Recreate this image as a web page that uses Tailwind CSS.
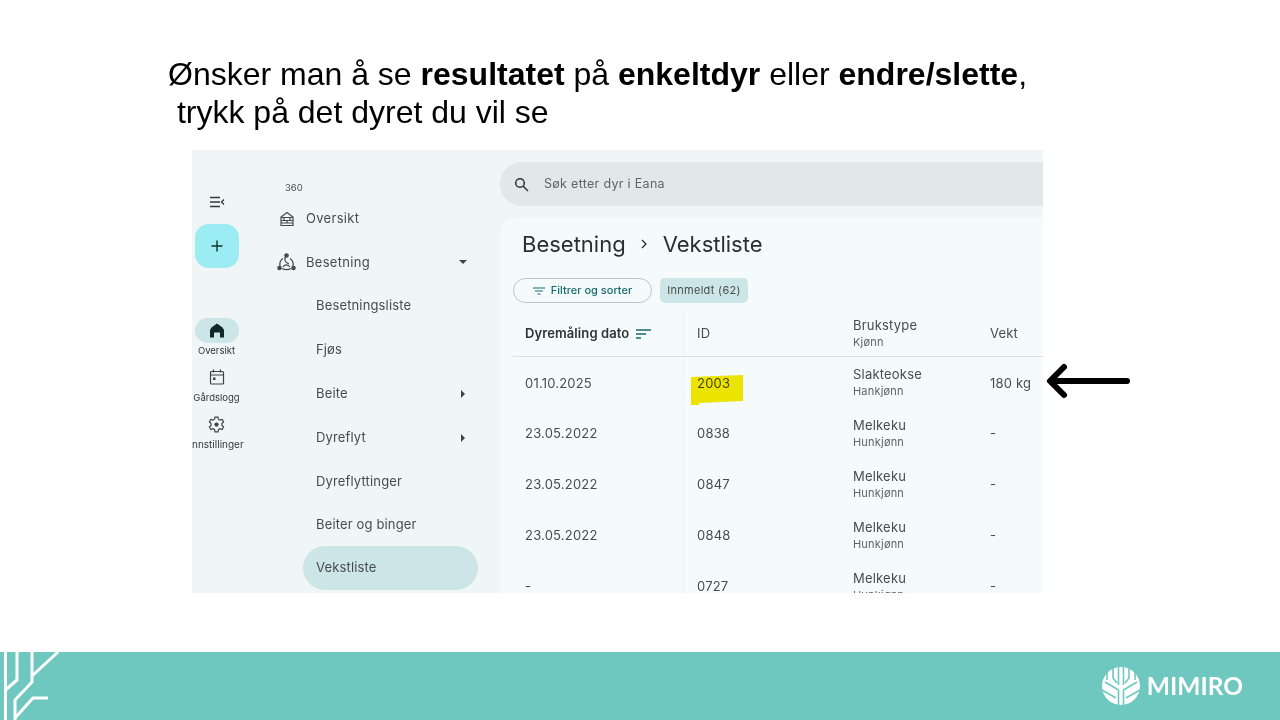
<!DOCTYPE html>
<html lang="en">
<head>
    <meta charset="UTF-8">
    <script src="https://cdn.jsdelivr.net/npm/@tailwindcss/browser@4"></script>
    <title>Vekstliste</title>
</head>
<body class="bg-white">
<div class="relative w-[1280px] h-[720px] overflow-hidden flex flex-col bg-white">

    <!-- heading -->
    <div class="h-[150px] pt-[55px] pl-[168px] font-['Liberation_Sans',sans-serif] text-[32px] leading-[38px] text-black">
        <p>Ønsker man å se <b>resultatet</b> på <b>enkeltdyr</b> eller <b>endre/slette</b>,</p>
        <p class="whitespace-pre"> trykk på det dyret du vil se</p>
    </div>

    <!-- app screenshot -->
    <div class="ml-[192px] w-[851px] h-[443px] overflow-hidden flex bg-[#f0f5f5] font-['Inter',sans-serif] text-[#474c4d]">

        <!-- rail -->
        <div class="w-[49px] shrink-0 flex flex-col items-center">
            <svg class="mt-[44px] w-4 h-4 shrink-0" viewBox="0 0 16 16" fill="none" stroke="#2f3a3c" stroke-width="1.300"><path d="M1 3.500h10M1 8h10M1 12.500h10M15 5.500 12.500 8 15 10.500"/></svg>
            <div class="mt-[14px] w-[44px] h-[44px] shrink-0 rounded-[14px] bg-[#9bedf3] flex items-center justify-center">
                <svg class="w-3 h-3" viewBox="0 0 12 12" stroke="#11312f" stroke-width="1.400"><path d="M6 0.500v11M0.500 6h11"/></svg>
            </div>
            <div class="mt-[50px] w-[44px] h-[25px] shrink-0 rounded-full bg-[#cce6e8] flex items-center justify-center">
                <svg class="w-[14px] h-[15px]" viewBox="0 0 14 15" fill="#10282c"><path d="M7 0.500 12.500 4.500 14 7V14.500H10V9.500H4V14.500H0V7L1.500 4.500Z"/></svg>
            </div>
            <span class="mt-[1px] text-[9.500px] leading-[14px] text-[#2f3a3c]">Oversikt</span>
            <svg class="mt-[11px] w-4 h-4 shrink-0" viewBox="0 0 16 16" fill="none" stroke="#3b4547" stroke-width="1.200"><rect x="1.500" y="2.500" width="13" height="12.500" rx="1"/><path d="M1.500 6h13M4.500 0.500v3M11.500 0.500v3"/><rect x="4" y="8.500" width="2.500" height="2.500" fill="#3b4547" stroke="none"/></svg>
            <span class="mt-[6px] text-[9.500px] leading-[14px] text-[#2f3a3c]">Gårdslogg</span>
            <svg class="mt-[11px] w-[17px] h-[17px] shrink-0" viewBox="0 0 16 16" fill="none" stroke="#3b4547" stroke-width="1.100"><path d="M6.600 1h2.800l.4 2 1.500.9 2-.7 1.400 2.400-1.600 1.400v1.900l1.600 1.400-1.400 2.400-2-.7-1.500.9-.4 2H6.600l-.4-2-1.500-.9-2 .7-1.400-2.400 1.600-1.400V7l-1.600-1.400 1.400-2.400 2 .7 1.500-.9z"/><circle cx="8" cy="8" r="2" fill="#3b4547" stroke="none"/></svg>
            <span class="mt-[4px] text-[10px] leading-[14px] text-[#2f3a3c] whitespace-nowrap">Innstillinger</span>
        </div>

        <!-- nav -->
        <div class="w-[259px] shrink-0 pl-[26px] pr-[22px] text-[13px] tracking-[0.15px]">
            <div class="pt-[32px] pl-[18px] h-[46.500px] text-[9.500px] leading-[12px] text-[#474c4d] tracking-normal">360</div>
            <div class="h-[44px] flex items-center pl-[12px] tracking-[0.3px]">
                <svg class="w-[16px] h-[16px] mr-[11px]" viewBox="0 0 16 16" fill="none" stroke="#444c4e" stroke-width="1.200"><path d="M2 14.500V6L8 1.500 14 6V14.500ZM2 6.500h12M2 9.500h12M2 12h12M8 9.500V12M5 6.500V9.500M11 6.500V9.500"/></svg>
                Oversikt
            </div>
            <div class="h-[43.800px] flex items-center pl-[9px] tracking-[0.3px]">
                <svg class="w-[21px] h-[20px] mr-[9px]" viewBox="0 0 21 20" fill="none" stroke="#444c4e" stroke-width="1.200"><path d="M7 6.500C4.500 8 3.500 11 4 14M14 6.500C16.500 8 17.500 11 17 14M6 16.500C9 18 12 18 15 16.500M10.500 3.500C7.500 7 8.500 10 13 12M14 15C12 12.500 9 12 7 15"/><circle cx="10.500" cy="3.500" r="2.300" fill="#444c4e" stroke="none"/><circle cx="3.500" cy="16" r="2.300" fill="#444c4e" stroke="none"/><circle cx="17.500" cy="16" r="2.300" fill="#444c4e" stroke="none"/></svg>
                <span class="flex-1">Besetning</span>
                <span class="w-0 h-0 mr-[11px] border-x-[4px] border-x-transparent border-t-[4px] border-t-[#3b4547]"></span>
            </div>
            <div class="h-[43.800px] flex items-center pl-[49px]">Besetningsliste</div>
            <div class="h-[43.800px] flex items-center pl-[49px]">Fjøs</div>
            <div class="h-[43.800px] flex items-center pl-[49px]">
                <span class="flex-1">Beite</span>
                <span class="w-0 h-0 mr-[13px] border-y-[4px] border-y-transparent border-l-[4px] border-l-[#3b4547]"></span>
            </div>
            <div class="h-[43.800px] flex items-center pl-[49px]">
                <span class="flex-1">Dyreflyt</span>
                <span class="w-0 h-0 mr-[13px] border-y-[4px] border-y-transparent border-l-[4px] border-l-[#3b4547]"></span>
            </div>
            <div class="h-[43.800px] flex items-center pl-[49px]">Dyreflyttinger</div>
            <div class="h-[43.800px] flex items-center pl-[49px]">Beiter og binger</div>
            <div class="h-[44px] -mt-[1.500px] ml-[36px] w-[175px] rounded-full bg-[#cce6e8] flex items-center pl-[13px]">Vekstliste</div>
        </div>

        <!-- main -->
        <div class="flex-1 min-w-0 flex flex-col pt-[12px]">
            <div class="h-[44px] shrink-0 w-[560px] rounded-full bg-[#e2e8e8] flex items-center pl-[14px] text-[12.500px] tracking-[0.3px] text-[#5d6566]">
                <svg class="w-[15px] h-[15px] mr-[15px]" viewBox="0 0 15 15" fill="none" stroke="#2c3436" stroke-width="1.500"><circle cx="6" cy="6" r="4.300"/><path d="M9.200 9.200 14 14"/></svg>
                Søk etter dyr i Eana
            </div>
            <div class="mt-[12px] flex-1 rounded-tl-[16px] bg-[#f5fbfb] pl-[13px] w-[560px]">
                <div class="h-[52px] pl-[9px] flex items-center text-[22px] text-[#2a2f30]">
                    Besetning
                    <svg class="w-[8px] h-[10px] ml-[14px] mr-[15px]" viewBox="0 0 8 10" fill="none" stroke="#2a2f30" stroke-width="1.300"><path d="M2 1l4 4-4 4"/></svg>
                    Vekstliste
                </div>
                <div class="mt-[8px] h-[25px] flex gap-[8px] text-[11px]">
                    <div class="w-[139px] rounded-full border border-[#bcc7c8] flex items-center justify-center font-medium text-[#176a70]">
                        <svg class="w-[12px] h-[8px] mr-[6px]" viewBox="0 0 12 8" stroke="#176a70" stroke-width="1.100"><path d="M0 1h12M2 4h8M4.500 7h3"/></svg>
                        Filtrer og sorter
                    </div>
                    <div class="w-[88px] rounded-[5px] bg-[#cce6e8] flex items-center justify-center text-[#474c4d] tracking-[0.3px]">Innmeldt (62)</div>
                </div>
                <div class="mt-[8px] h-[46px] flex border-b border-[#d9e2e3] text-[13px] tracking-[0.2px]">
                    <div class="w-[171px] border-r border-[#ecf2f2] pl-[12px] flex items-center font-semibold text-[#2e3436] tracking-[0.1px]">
                        Dyremåling dato
                        <svg class="w-[15px] h-[10px] ml-[7px]" viewBox="0 0 15 10" stroke="#176a70" stroke-width="1.300"><path d="M0 1h15M0 5h10M0 9h5"/></svg>
                    </div>
                    <div class="w-[169px] pl-[13px] flex items-center">ID</div>
                    <div class="w-[137px] flex flex-col justify-center leading-[17px]">Brukstype<span class="text-[11px] text-[#5d6566]">Kjønn</span></div>
                    <div class="flex items-center">Vekt</div>
                </div>
                <div class="h-[51px] pt-[2px] flex text-[13px] tracking-[0.2px]">
                    <div class="w-[171px] border-r border-[#ecf2f2] pl-[12px] flex items-center">01.10.2025</div>
                    <div class="w-[169px] pl-[13px] flex items-center">2003</div>
                    <div class="w-[137px] -mt-[2px] flex flex-col justify-center leading-[17px]">Slakteokse<span class="text-[11px] text-[#5d6566]">Hankjønn</span></div>
                    <div class="flex items-center">180 kg</div>
                </div>
                <div class="h-[51px] flex text-[13px] tracking-[0.2px]">
                    <div class="w-[171px] border-r border-[#ecf2f2] pl-[12px] flex items-center">23.05.2022</div>
                    <div class="w-[169px] pl-[13px] flex items-center">0838</div>
                    <div class="w-[137px] flex flex-col justify-center leading-[17px]">Melkeku<span class="text-[11px] text-[#5d6566]">Hunkjønn</span></div>
                    <div class="flex items-center">-</div>
                </div>
                <div class="h-[51px] flex text-[13px] tracking-[0.2px]">
                    <div class="w-[171px] border-r border-[#ecf2f2] pl-[12px] flex items-center">23.05.2022</div>
                    <div class="w-[169px] pl-[13px] flex items-center">0847</div>
                    <div class="w-[137px] flex flex-col justify-center leading-[17px]">Melkeku<span class="text-[11px] text-[#5d6566]">Hunkjønn</span></div>
                    <div class="flex items-center">-</div>
                </div>
                <div class="h-[51px] flex text-[13px] tracking-[0.2px]">
                    <div class="w-[171px] border-r border-[#ecf2f2] pl-[12px] flex items-center">23.05.2022</div>
                    <div class="w-[169px] pl-[13px] flex items-center">0848</div>
                    <div class="w-[137px] flex flex-col justify-center leading-[17px]">Melkeku<span class="text-[11px] text-[#5d6566]">Hunkjønn</span></div>
                    <div class="flex items-center">-</div>
                </div>
                <div class="h-[51px] flex text-[13px] tracking-[0.2px]">
                    <div class="w-[171px] border-r border-[#ecf2f2] pl-[12px] flex items-center">-</div>
                    <div class="w-[169px] pl-[13px] flex items-center">0727</div>
                    <div class="w-[137px] flex flex-col justify-center leading-[17px]">Melkeku<span class="text-[11px] text-[#5d6566]">Hunkjønn</span></div>
                    <div class="flex items-center">-</div>
                </div>
            </div>
        </div>
    </div>

    <!-- footer -->
    <div class="mt-[59px] h-[68px] shrink-0 bg-[#6fc8bf] flex items-center justify-between pr-[37px]">
        <svg class="w-[60px] h-[68px]" viewBox="0 0 60 68" fill="none" stroke="#fff" stroke-width="3"><path d="M5.500 0V68M17 0V28L5.500 38M32 0V30L15 48V68M58 0 32 24M15 66 33 46H48"/></svg>
        <div class="flex items-center gap-[7px]">
            <svg class="w-[38px] h-[38px]" viewBox="0 0 38 38"><circle cx="19" cy="19" r="19" fill="#fff"/><g fill="none" stroke="#6fc8bf" stroke-width="1.600"><path d="M16.500 38V23L3 15M21.500 38V23L35 15M16.500 18V0M21.500 18V0M11 1V11L15 16M27 1V11L23 16M5 5V13M33 5V13M0 23 14 31M38 23 24 31"/></g></svg>
            <span class="font-['Lato',sans-serif] font-bold text-[24.500px] leading-none text-white">MIMIRO</span>
        </div>
    </div>

    <!-- slide annotations -->
    <svg class="absolute left-[688px] top-[372px] w-[58px] h-[36px] mix-blend-multiply" viewBox="0 0 58 36"><path d="M3 5 55 3V29L11 31V33H3Z" fill="#f6e800"/></svg>
    <svg class="absolute left-[1044px] top-[360px] w-[90px] h-[42px]" viewBox="0 0 90 42" fill="none" stroke="#000" stroke-width="6" stroke-linecap="round" stroke-linejoin="round"><path d="M83 21H7M20 7 6 21 20 35"/></svg>
</div>
</body>
</html>
